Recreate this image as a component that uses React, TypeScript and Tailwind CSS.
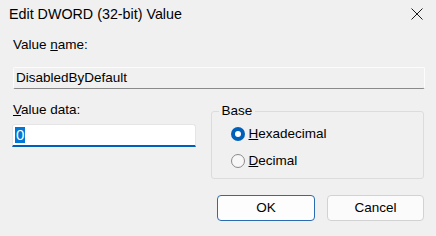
export default function App() {
  return (
    <div className="w-[436px] h-[236px] bg-[#f0f0f0] text-black font-['Liberation_Sans',Arial,sans-serif] overflow-hidden select-none">
      {/* Title bar */}
      <div className="h-[28px] flex items-center justify-between pl-[9px] pr-[13px]">
        <span className="text-[14.3px] leading-[18px]">Edit DWORD (32-bit) Value</span>
        <svg width="12" height="12" viewBox="0 0 12 12" className="block">
          <path d="M0.5 0.5 L11.5 11.5 M11.5 0.5 L0.5 11.5" stroke="#1a1a1a" strokeWidth="1" fill="none" />
        </svg>
      </div>

      <div className="px-[12px] text-[13.5px] leading-[16px]">
        <div className="mt-[9px] px-[1px]">
          Value <u>n</u>ame:
        </div>
        <div className="mt-[14px] ml-[1px] mr-[-1px] h-[22px] flex items-center px-[2px] border border-[#fcfcfc] border-b-[#8a8a8a] rounded-[2px]">
          DisabledByDefault
        </div>

        <div className="flex items-start mt-[13px]">
          <div className="w-[184px]">
            <div className="px-[1px]">
              <u>V</u>alue data:
            </div>
            <div className="mt-[6px] h-[23px] bg-white border border-[#e5e5e5] border-b-2 border-b-[#005fb8] rounded-t-[3px] flex items-center pl-[2px]">
              <span className="bg-[#0078d7] text-white text-[15px] px-[1px] h-[16px] leading-[16px]">0</span>
            </div>
          </div>

          <fieldset className="ml-[15px] w-[214px] h-[77px] border border-[#dcdcdc] rounded-[3px] pl-[19px]">
            <legend className="px-[3px] ml-[-12px] leading-[18px]">Base</legend>
            <div className="mt-[4px] h-[20px] flex items-center gap-[4px]">
              <span className="w-[14px] h-[14px] rounded-full bg-[#005fb8] flex items-center justify-center">
                <span className="w-[6px] h-[6px] rounded-full bg-white" />
              </span>
              <span>
                <u>H</u>exadecimal
              </span>
            </div>
            <div className="mt-[7px] h-[20px] flex items-center gap-[4px]">
              <span className="w-[14px] h-[14px] rounded-full border border-[#8a8a8a] bg-[#f7f7f7]" />
              <span>
                <u>D</u>ecimal
              </span>
            </div>
          </fieldset>
        </div>

        <div className="mt-[16px] flex justify-end gap-[12px]">
          <button className="w-[98px] h-[26px] bg-[#fdfdfd] border border-[#2b6bb0] rounded-[4px] text-[13.5px]">
            OK
          </button>
          <button className="w-[97px] h-[26px] bg-[#fbfbfb] border border-[#d2d2d2] rounded-[4px] text-[13.5px]">
            Cancel
          </button>
        </div>
      </div>
    </div>
  );
}
